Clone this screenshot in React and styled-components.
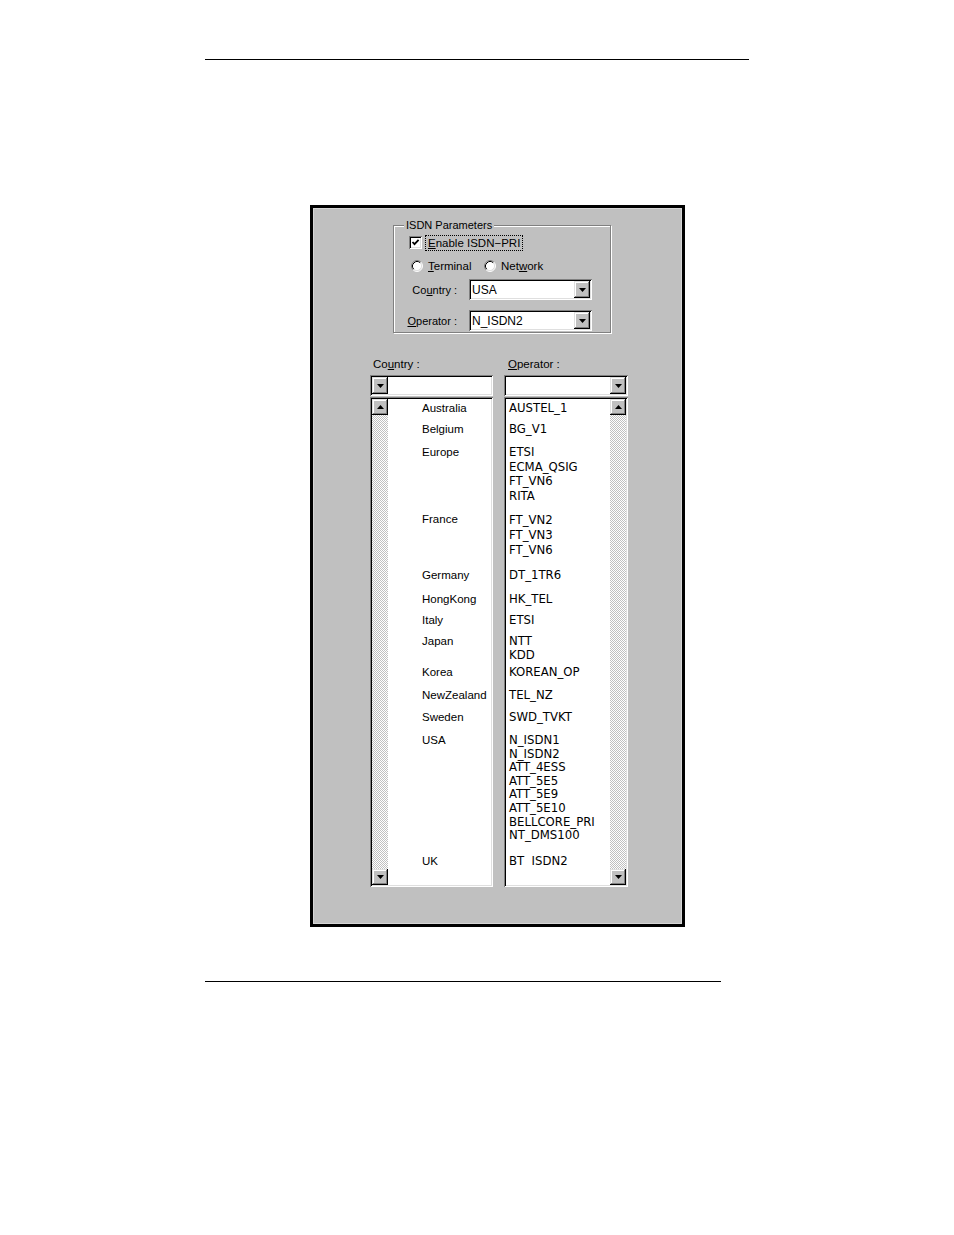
import React from "react";
import styled, { createGlobalStyle, css } from "styled-components";

const GREY = "#c0c0c0";

const GlobalStyle = createGlobalStyle`
  html, body { margin: 0; padding: 0; background: #fff; }
  body { font-family: "Liberation Sans", Arial, sans-serif; color: #000; }
`;

const sunken = css`
  box-shadow: inset 1px 1px 0 #808080, inset -1px -1px 0 #fff,
    inset 2px 2px 0 #000, inset -2px -2px 0 #dfdfdf;
`;

const raised = css`
  background: ${GREY};
  box-shadow: inset -1px -1px 0 #000, inset 1px 1px 0 #dfdfdf,
    inset -2px -2px 0 #808080, inset 2px 2px 0 #fff;
`;

// country / operator table, heights are the spacing of each block in the list
const groups = [
  { country: "Australia", ops: ["AUSTEL_1"], h: 21, lh: 14 },
  { country: "Belgium", ops: ["BG_V1"], h: 23, lh: 14 },
  { country: "Europe", ops: ["ETSI", "ECMA_QSIG", "FT_VN6", "RITA"], h: 67, lh: 14.7 },
  { country: "France", ops: ["FT_VN2", "FT_VN3", "FT_VN6"], h: 56, lh: 15 },
  { country: "Germany", ops: ["DT_1TR6"], h: 24, lh: 14 },
  { country: "HongKong", ops: ["HK_TEL"], h: 21, lh: 14 },
  { country: "Italy", ops: ["ETSI"], h: 21, lh: 14 },
  { country: "Japan", ops: ["NTT", "KDD"], h: 31, lh: 14 },
  { country: "Korea", ops: ["KOREAN_OP"], h: 23, lh: 14 },
  { country: "NewZealand", ops: ["TEL_NZ"], h: 22, lh: 14 },
  { country: "Sweden", ops: ["SWD_TVKT"], h: 23, lh: 14 },
  {
    country: "USA",
    ops: ["N_ISDN1", "N_ISDN2", "ATT_4ESS", "ATT_5E5", "ATT_5E9", "ATT_5E10", "BELLCORE_PRI", "NT_DMS100"],
    h: 121,
    lh: 13.6,
  },
  { country: "UK", ops: ["BT  ISDN2"], h: 14, lh: 14 },
];

function ArrowIcon({ up }) {
  return (
    <svg width="7" height="4" viewBox="0 0 7 4">
      <polygon points={up ? "3.5,0 7,4 0,4" : "0,0 7,0 3.5,4"} fill="#000" />
    </svg>
  );
}

function CheckIcon() {
  return (
    <svg width="9" height="9" viewBox="0 0 9 9">
      <path d="M1.5 4 L3.5 6.2 L7.6 1.8" stroke="#000" strokeWidth="1.8" fill="none" />
    </svg>
  );
}

function RadioIcon() {
  return (
    <svg width="12" height="12" viewBox="0 0 12 12">
      <circle cx="6" cy="6" r="5" fill="#fff" />
      <path d="M2.11 9.89 A5.5 5.5 0 0 1 9.89 2.11" stroke="#808080" fill="none" />
      <path d="M9.89 2.11 A5.5 5.5 0 0 1 2.11 9.89" stroke="#fff" fill="none" />
      <path d="M2.82 9.18 A4.5 4.5 0 0 1 9.18 2.82" stroke="#000" fill="none" />
      <path d="M9.18 2.82 A4.5 4.5 0 0 1 2.82 9.18" stroke="#dfdfdf" fill="none" />
    </svg>
  );
}

function ComboBox({ value, buttonLeft, width }) {
  return (
    <Combo $w={width} $left={buttonLeft}>
      <ComboText>{value}</ComboText>
      <DropButton>
        <ArrowIcon />
      </DropButton>
    </Combo>
  );
}

function ListBox({ side, width, children }) {
  return (
    <List $w={width} $side={side}>
      <ScrollBar>
        <ScrollButton>
          <ArrowIcon up />
        </ScrollButton>
        <Track />
        <ScrollButton>
          <ArrowIcon />
        </ScrollButton>
      </ScrollBar>
      {children}
    </List>
  );
}

export default function App() {
  return (
    <Page>
      <GlobalStyle />
      <Rule $w={544} />
      <Frame>
        <GroupBox>
          <Legend>ISDN Parameters</Legend>
          <CheckRow>
            <CheckBox>
              <CheckIcon />
            </CheckBox>
            <FocusLabel>
              <u>E</u>nable ISDN−PRI
            </FocusLabel>
          </CheckRow>
          <RadioRow>
            <RadioOption $w={73}>
              <RadioIcon />
              <span>
                <u>T</u>erminal
              </span>
            </RadioOption>
            <RadioOption>
              <RadioIcon />
              <span>
                Net<u>w</u>ork
              </span>
            </RadioOption>
          </RadioRow>
          <FieldRow>
            <FieldLabel>
              Co<u>u</u>ntry :
            </FieldLabel>
            <ComboBox value="USA" width={123} />
          </FieldRow>
          <FieldRow $gap={10}>
            <FieldLabel>
              <u>O</u>perator :
            </FieldLabel>
            <ComboBox value="N_ISDN2" width={123} />
          </FieldRow>
        </GroupBox>

        <Columns>
          <Column>
            <Header $indent={3}>
              Co<u>u</u>ntry :
            </Header>
            <ComboBox value="" width={123} buttonLeft />
            <ListBox side="left" width={123}>
              <Items $pad={34}>
                {groups.map((g) => (
                  <CountryGroup key={g.country} $h={g.h}>
                    {g.country}
                  </CountryGroup>
                ))}
              </Items>
            </ListBox>
          </Column>
          <Column>
            <Header $indent={4}>
              <u>O</u>perator :
            </Header>
            <ComboBox value="" width={124} />
            <ListBox side="right" width={124}>
              <Items $pad={3}>
                {groups.map((g) => (
                  <OperatorGroup key={g.country} $h={g.h} $lh={g.lh}>
                    {g.ops.map((op, i) => (
                      <div key={i}>{op}</div>
                    ))}
                  </OperatorGroup>
                ))}
              </Items>
            </ListBox>
          </Column>
        </Columns>
      </Frame>
      <Rule $w={516} $top={54} />
    </Page>
  );
}

const Page = styled.div`
  padding: 59px 0 200px 205px;
`;

const Rule = styled.div`
  width: ${(p) => p.$w}px;
  height: 1px;
  background: #000;
  margin-top: ${(p) => p.$top || 0}px;
`;

const Frame = styled.div`
  box-sizing: border-box;
  width: 375px;
  height: 722px;
  margin: 145px 0 0 105px;
  border: 3px solid #000;
  background: ${GREY};
  box-shadow: inset 0 0 0 1px #d6d6d6;
  padding-top: 17px;
  display: flex;
  flex-direction: column;
  font-size: 11.5px;
`;

const GroupBox = styled.div`
  position: relative;
  box-sizing: border-box;
  width: 218px;
  height: 108px;
  margin-left: 80px;
  border: 1px solid #808080;
  box-shadow: inset 1px 1px 0 #fff, 1px 1px 0 #fff;
  padding: 8px 0 0 0;
  display: flex;
  flex-direction: column;
`;

const Legend = styled.span`
  position: absolute;
  top: -8px;
  left: 10px;
  padding: 0 2px;
  background: ${GREY};
  font-size: 11px;
  line-height: 14px;
`;

const CheckRow = styled.div`
  height: 17px;
  display: flex;
  align-items: center;
  padding-left: 15px;
  gap: 3px;
`;

const CheckBox = styled.div`
  box-sizing: border-box;
  width: 13px;
  height: 13px;
  background: #fff;
  ${sunken};
  display: flex;
  align-items: center;
  justify-content: center;
`;

const FocusLabel = styled.span`
  border: 1px dotted #000;
  padding: 0 2px 0 2px;
  line-height: 14px;
`;

const RadioRow = styled.div`
  height: 17px;
  margin-top: 6px;
  display: flex;
  align-items: center;
  padding-left: 17px;
`;

const RadioOption = styled.label`
  display: flex;
  align-items: center;
  gap: 5px;
  width: ${(p) => (p.$w ? `${p.$w}px` : "auto")};
`;

const FieldRow = styled.div`
  height: 21px;
  margin-top: ${(p) => p.$gap || 5}px;
  display: flex;
  align-items: center;
  gap: 12px;
`;

const FieldLabel = styled.span`
  width: 63px;
  text-align: right;
  font-size: 11px;
`;

const Combo = styled.div`
  box-sizing: border-box;
  width: ${(p) => p.$w}px;
  height: 21px;
  padding: 2px;
  background: #fff;
  ${sunken};
  display: flex;
  flex-direction: ${(p) => (p.$left ? "row-reverse" : "row")};
  align-items: center;
`;

const ComboText = styled.span`
  flex: 1;
  padding-left: 1px;
  font-size: 12px;
`;

const DropButton = styled.div`
  width: 16px;
  height: 17px;
  ${raised};
  display: flex;
  align-items: center;
  justify-content: center;
`;

const Columns = styled.div`
  display: flex;
  gap: 11px;
  margin: 24px 0 0 57px;
`;

const Column = styled.div`
  display: flex;
  flex-direction: column;
`;

const Header = styled.div`
  height: 14px;
  line-height: 14px;
  padding-left: ${(p) => p.$indent}px;
  margin-bottom: 4px;
`;

const List = styled.div`
  box-sizing: border-box;
  width: ${(p) => p.$w}px;
  height: 490px;
  margin-top: 1px;
  padding: 2px;
  background: #fff;
  ${sunken};
  display: flex;
  flex-direction: ${(p) => (p.$side === "left" ? "row" : "row-reverse")};
`;

const ScrollBar = styled.div`
  width: 16px;
  display: flex;
  flex-direction: column;
`;

const ScrollButton = styled.div`
  height: 16px;
  ${raised};
  display: flex;
  align-items: center;
  justify-content: center;
`;

const Track = styled.div`
  flex: 1;
  background-color: #fff;
  background-image: repeating-conic-gradient(${GREY} 0 25%, #fff 0 50%);
  background-size: 2px 2px;
`;

const Items = styled.div`
  flex: 1;
  padding: 2px 0 0 ${(p) => p.$pad}px;
  overflow: hidden;
`;

const CountryGroup = styled.div`
  height: ${(p) => p.$h}px;
  line-height: 14px;
  font-size: 11.5px;
`;

const OperatorGroup = styled.div`
  height: ${(p) => p.$h}px;
  line-height: ${(p) => p.$lh}px;
  font-family: "Liberation Sans Narrow", "DejaVu Sans Condensed", sans-serif;
  font-size: 13px;
  white-space: pre;
`;
